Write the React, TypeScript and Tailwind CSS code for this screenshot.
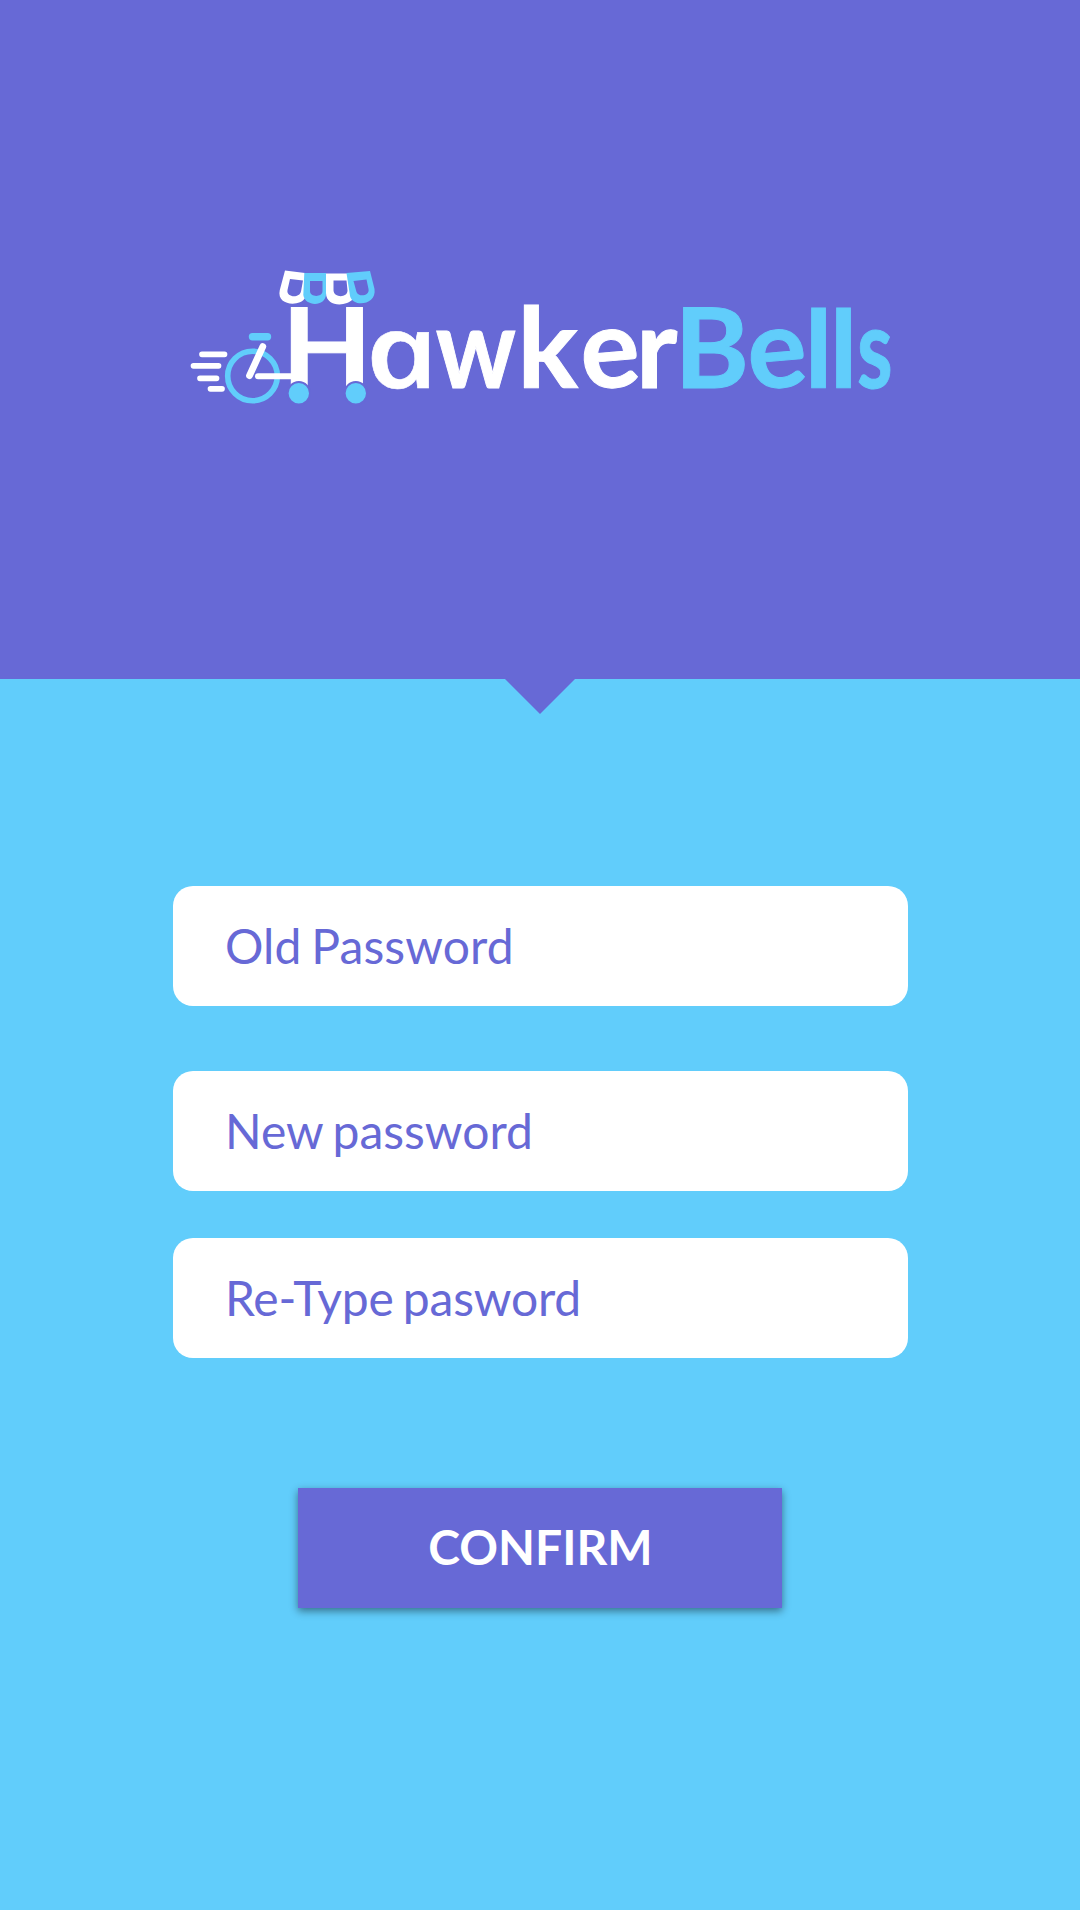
type Glyph = {
  ch: string;
  x: number;
  sx?: number;
  sy?: number;
  blue?: boolean;
  slanted?: boolean;
  tilt?: boolean;
};

const glyphs: Glyph[] = [
  { ch: "H", x: 282, sx: 1.05, sy: 0.995 },
  { ch: "a", x: 372.5, sx: 1.22, slanted: true },
  { ch: "w", x: 435.8, sx: 0.9 },
  { ch: "k", x: 517.6, sx: 1.02 },
  { ch: "e", x: 580.8, tilt: true },
  { ch: "r", x: 636 },
  { ch: "B", x: 674.6, sx: 1.02, blue: true },
  { ch: "e", x: 747.8, blue: true, tilt: true },
  { ch: "l", x: 804.7, sy: 0.97, blue: true },
  { ch: "l", x: 829.8, sy: 0.97, blue: true },
  { ch: "s", x: 857, sx: 0.73, blue: true },
];

const WHITE = "#ffffff";
const BLUE = "#61cdfb";

function glyphTransform({ x, sx = 1, sy = 1, slanted, tilt }: Glyph) {
  const base = `translate(${x} 387.700) scale(${sx} ${sy})`;
  return base + (slanted ? " skewX(12)" : "") + (tilt ? " rotate(-5 29 -28)" : "");
}

function Logo() {
  return (
    <svg
      className="block h-[180px] w-[740px]"
      viewBox="170 258 740 180"
      role="img"
      aria-label="HawkerBells"
    >
      {/* bicycle */}
      <g fill="none" strokeLinecap="round">
        <circle cx="252.5" cy="376" r="24.8" stroke={BLUE} strokeWidth="5.6" />
        <path d="M252.5 336.7H267.5" stroke={BLUE} strokeWidth="7.4" />
        <g stroke={WHITE} strokeWidth="6">
          <path d="M202 354.3H224.5M193.5 365.8H218.5M200 378.3H216.5M210.5 388.8H222" strokeWidth="5.7" />
          <path d="M249.5 375.7L262.8 346.6" strokeWidth="6.8" />
          <path d="M258 376.2H296" />
        </g>
      </g>

      {/* wordmark */}
      {glyphs.map((g, i) => (
        <text
          key={i}
          fill={g.blue ? BLUE : WHITE}
          stroke={g.blue ? BLUE : WHITE}
          strokeWidth={g.slanted ? 0.5 : 1}
          fontFamily={g.slanted ? "'Open Sans', sans-serif" : "Lato, sans-serif"}
          fontSize={g.slanted ? 103 : 111}
          fontStyle={g.slanted ? "italic" : "normal"}
          fontWeight={g.slanted ? 600 : 700}
          transform={glyphTransform(g)}
        >
          {g.ch}
        </text>
      ))}

      {/* cart wheels */}
      <g fill={BLUE} stroke="#6769d6" strokeWidth="2">
        <circle cx="298.8" cy="393.3" r="11.2" />
        <circle cx="355.8" cy="393.3" r="11.2" />
      </g>

      {/* awning */}
      <g fillRule="evenodd">
        <path fill={WHITE} d="M285 270.500L305 273L305 298C300 307 276 306 279.800 290ZM290 279L287.500 290C286 297.500 299.500 298.500 301 291.500L303 280.500Z" />
        <path fill={BLUE} d="M304.300 273H326V294C326 307 305 307 303.300 295ZM310 281V291C310 297.500 322.500 297.500 322.500 291V281Z" />
        <path fill={WHITE} d="M326 273.500H348L353 299C346 307 326 307 326 293ZM333.500 280.500V290.500C334 298 347.500 298 347.500 290.500L346.500 280.500Z" />
        <path fill={BLUE} d="M346.500 273L370 271L374.500 289C377 305 353 308 350 296ZM353.500 281L356.500 292C358.500 297.500 370 296 368.500 289L366.500 279.500Z" />
      </g>
    </svg>
  );
}

function Field({ label, spacing }: { label: string; spacing: string }) {
  return (
    <div
      className={`flex h-[120px] items-center rounded-[20px] bg-white pb-px pl-[52.5px] text-5xl whitespace-nowrap text-[#6769d6] ${spacing}`}
    >
      {label}
    </div>
  );
}

export default function App() {
  return (
    <main className="flex h-[1910px] w-[1080px] flex-col items-center bg-[#61cdfb] font-['Lato',sans-serif]">
      <header className="relative flex h-[679px] w-full shrink-0 justify-center bg-[#6769d6] pt-[258px]">
        <Logo />
        <svg className="absolute top-full left-[505px] h-[35px] w-[70px]" viewBox="0 0 70 35">
          <path d="M0 0H70L35 35Z" fill="#6769d6" />
        </svg>
      </header>
      <form className="flex w-[735px] flex-col pt-[207px]">
        <Field label="Old Password" spacing="tracking-[0.1px] [word-spacing:-2.5px]" />
        <div className="mt-[65px] flex flex-col gap-[47px]">
          <Field label="New password" spacing="[word-spacing:-2.5px]" />
          <Field label="Re-Type pasword" spacing="tracking-[-0.2px] [word-spacing:-2.8px]" />
        </div>
        <button
          type="button"
          className="mt-[130px] h-[120px] w-[484px] self-center bg-[#6769d6] pb-[3px] pl-px text-5xl font-bold text-white shadow-[0_3px_8px_rgba(0,0,0,0.45)]"
        >
          CONFIRM
        </button>
      </form>
    </main>
  );
}
